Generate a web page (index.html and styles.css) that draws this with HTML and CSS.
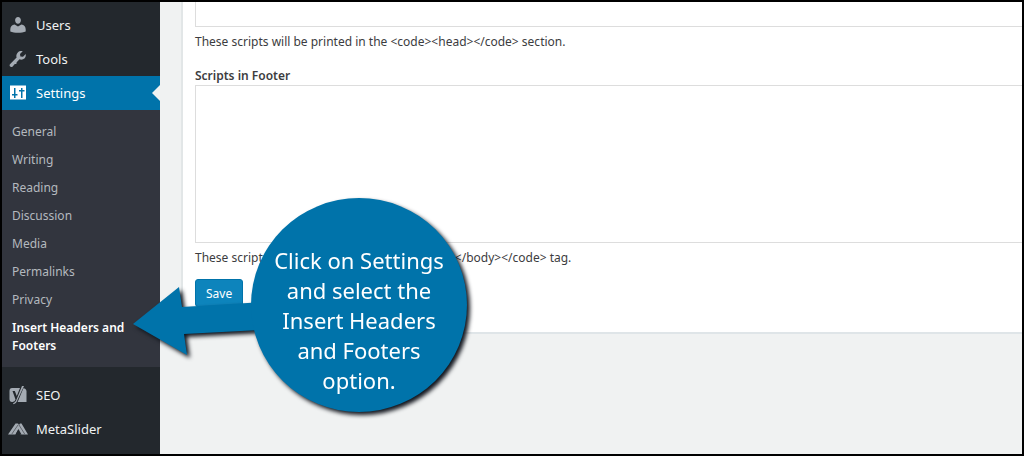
FILE: index.html
```html
<!DOCTYPE html>
<html lang="en">
<head>
    <meta charset="UTF-8">
    <meta name="viewport" content="width=device-width, initial-scale=1.0">
    <title>Insert Headers and Footers</title>
    <link rel="stylesheet" href="styles.css">
</head>
<body>
    <div class="frame">
        <nav class="sidebar">
            <a href="#" class="menu-item">
                <svg class="icon" viewBox="0 0 20 20"><path d="M10 8.700c-1.700 0-2.900-1.500-2.900-3.400C7.100 3.300 8.300 2 10 2s2.900 1.300 2.900 3.300c0 1.900-1.200 3.400-2.900 3.400zM2.300 16.500v-2.300c0-2.600 1.700-4.400 4.300-4.700l3.400 2 3.400-2c2.600.3 4.300 2.100 4.300 4.700v2.300c-2 1-4.700 1.300-7.700 1.300s-5.700-.3-7.700-1.300z"/></svg>
                Users
            </a>
            <a href="#" class="menu-item">
                <svg class="icon" viewBox="0 0 20 20"><path d="M16.700 9.300c-1.500 1.400-3.600 1.700-5.200 1L8.700 13.200l-.4 1.700-1.500.2-2.100 2.400c-.7.7-1.900.8-2.600.1s-.6-1.800.1-2.500L8.600 8.500c-.6-1.700-.2-3.700 1.200-5.100 1.300-1.300 3.300-1.700 4.900-1.200l-2.700 2.700.4 2.500 2.600.4L17.700 5.100c.3 1.500 0 3.100-1 4.200z"/></svg>
                Tools
            </a>
            <a href="#" class="menu-item current">
                <svg class="icon" viewBox="0 0 20 20"><path fill-rule="evenodd" d="M2 2.500h16v14H2zM6 5v6H4v1.500h2V15h1.500v-2.500h2V11h-2V5zM13 5v2h-2v1.500h2V15h1.500V8.500h2V7h-2V5z"/></svg>
                Settings
            </a>
            <div class="submenu">
                <a href="#">General</a>
                <a href="#">Writing</a>
                <a href="#">Reading</a>
                <a href="#">Discussion</a>
                <a href="#">Media</a>
                <a href="#">Permalinks</a>
                <a href="#">Privacy</a>
                <a href="#" class="active">Insert Headers and Footers</a>
            </div>
            <a href="#" class="menu-item">
                <svg class="icon" viewBox="0 0 20 20"><path d="M4 3h10q4 0 4.500 3v11H4q-2.500 0-2.500-3V6q0-3 2.500-3z"/><path class="cut" d="M4.500 6h2.300l2 5L13 .5h3.500L10.500 15Q9 19.500 4.500 20v-3q2.500-.4 3-2.500z"/><path d="M14 1h2L9.600 14.700Q8.300 18.800 5.200 19.300v-1q2-.5 3-3z"/></svg>
                SEO
            </a>
            <a href="#" class="menu-item">
                <svg class="icon" viewBox="0 0 20 20"><path d="M0 15.500 7.500 4.500h2.500l1 1.500 1-1.500h1.500L20 15.500h-7.500L10 11l-2.500 4.500z"/><path class="cut" d="M7.500 15.500 10.500 10l3 5.500z"/><path class="line" d="M3.500 15.500 10 6M11 6l6 9.500"/></svg>
                MetaSlider
            </a>
        </nav>

        <main class="content">
            <form class="panel">
                <textarea class="scripts scripts-header" aria-label="Scripts in Header"></textarea>
                <p>These scripts will be printed in the &lt;code&gt;&lt;head&gt;&lt;/code&gt; section.</p>
                <label for="footer-scripts">Scripts in Footer</label>
                <textarea id="footer-scripts" class="scripts scripts-footer"></textarea>
                <p>These scripts will be printed above the &lt;code&gt;&lt;/body&gt;&lt;/code&gt; tag.</p>
                <button type="button" class="save">Save</button>
            </form>
        </main>

        <div class="callout">
            <svg class="arrow" viewBox="0 0 140 90"><path d="M7 41 53 4l3 20 80-5v28l-78 4 3 21z"/></svg>
            <div class="bubble">Click on Settings<br>and select the<br>Insert Headers<br>and Footers<br>option.</div>
        </div>
    </div>
</body>
</html>
```
FILE: styles.css
```css
* {
    box-sizing: border-box;
}
body {
    margin: 0;
    font-family: "Noto Sans", "Open Sans", sans-serif;
    font-size: 12px;
    color: #3c3c40;
}
.frame {
    position: relative;
    display: flex;
    min-height: 100vh;
    border: 2px solid #000;
    background: #f0f2f2;
    overflow: hidden;
}

/* admin menu */
.sidebar {
    flex: 0 0 158px;
    padding: 6px 0 8px;
    background: #23282d;
}
.menu-item {
    position: relative;
    display: flex;
    align-items: center;
    gap: 8px;
    height: 34px;
    padding-left: 6px;
    font-size: 13px;
    color: #f0f2f2;
    text-decoration: none;
}
.icon {
    width: 20px;
    height: 20px;
    fill: #a4abb3;
}
.icon .cut {
    fill: #23282d;
}
.icon .line {
    fill: none;
    stroke: #60656c;
}
.current {
    background: #0073aa;
    color: #fff;
}
.current .icon {
    fill: #fff;
}
.current::after {
    content: "";
    position: absolute;
    right: 0;
    top: 9px;
    border: 8px solid transparent;
    border-left: 0;
    border-right-color: #f0f2f2;
}
.submenu {
    margin-bottom: 11px;
    padding: 8px 0 7px;
    background: #32353e;
}
.submenu a {
    display: block;
    padding: 5px 30px 5px 10px;
    line-height: 18px;
    color: #b4b9be;
    text-decoration: none;
}
.submenu .active {
    font-weight: 600;
    color: #fff;
}

/* settings form */
.content {
    flex: 1;
    min-width: 0;
    padding-left: 21px;
}
.panel {
    padding: 0 0 25px 12px;
    border-left: 2px solid #e2e6e7;
    border-bottom: 2px solid #dfe5e8;
    background: #fff;
}
.scripts {
    display: block;
    width: 100%;
    border: 1px solid #ddd;
    border-right: 0;
    background: #fff;
    resize: none;
}
.scripts-header {
    height: 25px;
    border-top: 0;
}
.scripts-footer {
    height: 158px;
}
.panel p {
    margin: 0;
    padding: 6px 0;
    line-height: 18px;
}
.panel label {
    display: block;
    margin-top: 10px;
    line-height: 18px;
    font-weight: 600;
}
.save {
    height: 28px;
    margin-top: 6px;
    padding: 0 10px;
    border: 1px solid #0073aa;
    border-radius: 3px;
    background: #0d84bc;
    font-family: inherit;
    font-size: 12px;
    color: #fff;
}

/* callout drawn over the page */
.callout {
    position: absolute;
    left: 124px;
    top: 196px;
    display: flex;
    align-items: flex-start;
    filter: drop-shadow(3px 3px 2px #10141c);
}
.arrow {
    width: 140px;
    height: 90px;
    margin-top: 85px;
    margin-right: -15px;
    fill: #0073aa;
}
.bubble {
    display: flex;
    align-items: center;
    justify-content: center;
    width: 216px;
    height: 214px;
    padding-top: 30px;
    border-radius: 50%;
    background: #0073aa;
    font-size: 22px;
    line-height: 30px;
    text-align: center;
    color: #fff;
}
```
